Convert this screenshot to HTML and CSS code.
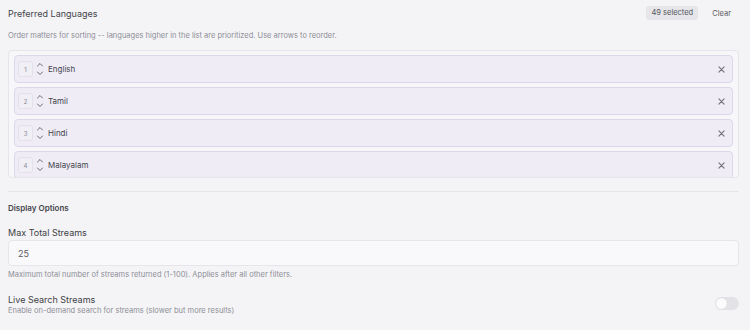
FILE: index.html
```html
<!DOCTYPE html>
<html>
<head>
<meta charset="utf-8">
<link rel="stylesheet" href="styles.css">
</head>
<body>
<div class="page">
  <div class="header">
    <div class="title">Preferred Languages</div>
    <div class="actions">
      <span class="badge">49 selected</span>
      <span class="clear">Clear</span>
    </div>
  </div>
  <div class="desc">Order matters for sorting -- languages higher in the list are prioritized. Use arrows to reorder.</div>
  <div class="list">
    <div class="item">
      <span class="num">1</span>
      <span class="arrows">
        <svg viewBox="0 0 8 5" class="chev"><path d="M1.5 4 L4 1.5 L6.5 4"/></svg>
        <svg viewBox="0 0 8 5" class="chev"><path d="M1.5 1 L4 3.5 L6.5 1"/></svg>
      </span>
      <span class="name">English</span>
      <svg viewBox="0 0 8 8" class="x"><path d="M1 1 L7 7 M7 1 L1 7"/></svg>
    </div>
    <div class="item">
      <span class="num">2</span>
      <span class="arrows">
        <svg viewBox="0 0 8 5" class="chev"><path d="M1.5 4 L4 1.5 L6.5 4"/></svg>
        <svg viewBox="0 0 8 5" class="chev"><path d="M1.5 1 L4 3.5 L6.5 1"/></svg>
      </span>
      <span class="name">Tamil</span>
      <svg viewBox="0 0 8 8" class="x"><path d="M1 1 L7 7 M7 1 L1 7"/></svg>
    </div>
    <div class="item">
      <span class="num">3</span>
      <span class="arrows">
        <svg viewBox="0 0 8 5" class="chev"><path d="M1.5 4 L4 1.5 L6.5 4"/></svg>
        <svg viewBox="0 0 8 5" class="chev"><path d="M1.5 1 L4 3.5 L6.5 1"/></svg>
      </span>
      <span class="name">Hindi</span>
      <svg viewBox="0 0 8 8" class="x"><path d="M1 1 L7 7 M7 1 L1 7"/></svg>
    </div>
    <div class="item">
      <span class="num">4</span>
      <span class="arrows">
        <svg viewBox="0 0 8 5" class="chev"><path d="M1.5 4 L4 1.5 L6.5 4"/></svg>
        <svg viewBox="0 0 8 5" class="chev"><path d="M1.5 1 L4 3.5 L6.5 1"/></svg>
      </span>
      <span class="name">Malayalam</span>
      <svg viewBox="0 0 8 8" class="x"><path d="M1 1 L7 7 M7 1 L1 7"/></svg>
    </div>
  </div>
  <div class="sep"></div>
  <div class="section">Display Options</div>
  <div class="label">Max Total Streams</div>
  <div class="input">25</div>
  <div class="help">Maximum total number of streams returned (1-100). Applies after all other filters.</div>
  <div class="toggle-row">
    <div>
      <div class="label2">Live Search Streams</div>
      <div class="help2">Enable on-demand search for streams (slower but more results)</div>
    </div>
    <div class="toggle"><span class="knob"></span></div>
  </div>
</div>
</body>
</html>
```
FILE: styles.css
```css
html, body {
  margin: 0;
  padding: 0;
  background: #f4f4f6;
  font-family: Inter, "Noto Sans", sans-serif;
  color: #3a3a40;
}
.page {
  padding: 6px 11px 0 8px;
}
.header {
  display: flex;
  justify-content: space-between;
  align-items: center;
  height: 14px;
}
.title {
  font-size: 9px;
  color: #45454c;
}
.actions {
  display: flex;
  align-items: center;
  gap: 14px;
  padding-right: 8px;
}
.badge {
  background: #e6e6ea;
  border-radius: 3px;
  font-size: 7.5px;
  color: #55555c;
  padding: 0 5px;
  height: 14px;
  line-height: 14px;
  display: inline-block;
}
.clear {
  font-size: 7.5px;
  color: #5a5a62;
}
.desc {
  margin-top: 11px;
  font-size: 7.5px;
  color: #8e8e96;
  line-height: 10px;
}
.list {
  margin-top: 9px;
  height: 122px;
  overflow: hidden;
  border: 1px solid #e6e6ea;
  border-radius: 4px;
  background: #f7f7f9;
  padding: 4px 5px 0 5px;
  display: flex;
  flex-direction: column;
  gap: 4px;
}
.item {
  flex: 0 0 auto;
  height: 26px;
  border: 1px solid #ddd7ea;
  border-radius: 4px;
  background: #efecf6;
  display: flex;
  align-items: center;
  padding: 0 7px 0 3px;
}
.num {
  width: 13px;
  height: 14px;
  border: 1px solid #e4e1ec;
  border-radius: 3px;
  background: #f1eff6;
  font-size: 6px;
  color: #8a8a94;
  display: flex;
  align-items: center;
  justify-content: center;
}
.arrows {
  display: flex;
  flex-direction: column;
  gap: 4px;
  margin-left: 3px;
  width: 8px;
}
.chev {
  width: 8px;
  height: 5px;
  display: block;
}
.chev path {
  fill: none;
  stroke: #5a5a64;
  stroke-width: 0.9;
  stroke-linecap: round;
  stroke-linejoin: round;
}
.name {
  margin-left: 4px;
  font-size: 8px;
  color: #44444c;
  flex: 1;
}
.x {
  width: 7px;
  height: 7px;
}
.x path {
  stroke: #6e6e76;
  stroke-width: 1.2;
  stroke-linecap: round;
}
.sep {
  margin-top: 13px;
  height: 1px;
  background: #e6e6ea;
}
.section {
  margin-top: 11px;
  font-size: 8px;
  font-weight: 600;
  color: #45454c;
  line-height: 10px;
}
.label {
  margin-top: 14px;
  font-size: 9px;
  color: #3e3e46;
  line-height: 11px;
}
.input {
  margin-top: 2px;
  height: 24px;
  border: 1px solid #e6e6ea;
  border-radius: 4px;
  background: #f9f9fb;
  font-size: 9px;
  color: #5a5a62;
  padding-left: 9px;
  display: flex;
  align-items: center;
}
.help {
  margin-top: 4px;
  font-size: 7.5px;
  color: #8e8e96;
  line-height: 10px;
}
.toggle-row {
  margin-top: 14px;
  display: flex;
  justify-content: space-between;
  align-items: flex-start;
}
.label2 {
  font-size: 9px;
  color: #3e3e46;
  line-height: 11px;
}
.help2 {
  margin-top: 1px;
  font-size: 7.5px;
  color: #8e8e96;
  line-height: 10px;
}
.toggle {
  margin-top: 3px;
  width: 24px;
  height: 13px;
  border-radius: 7px;
  background: #e3e3e7;
  position: relative;
}
.knob {
  position: absolute;
  left: 1px;
  top: 1px;
  width: 11px;
  height: 11px;
  border-radius: 50%;
  background: #fbfbfc;
  box-shadow: 0 0 1px rgba(0,0,0,0.15);
}
```
